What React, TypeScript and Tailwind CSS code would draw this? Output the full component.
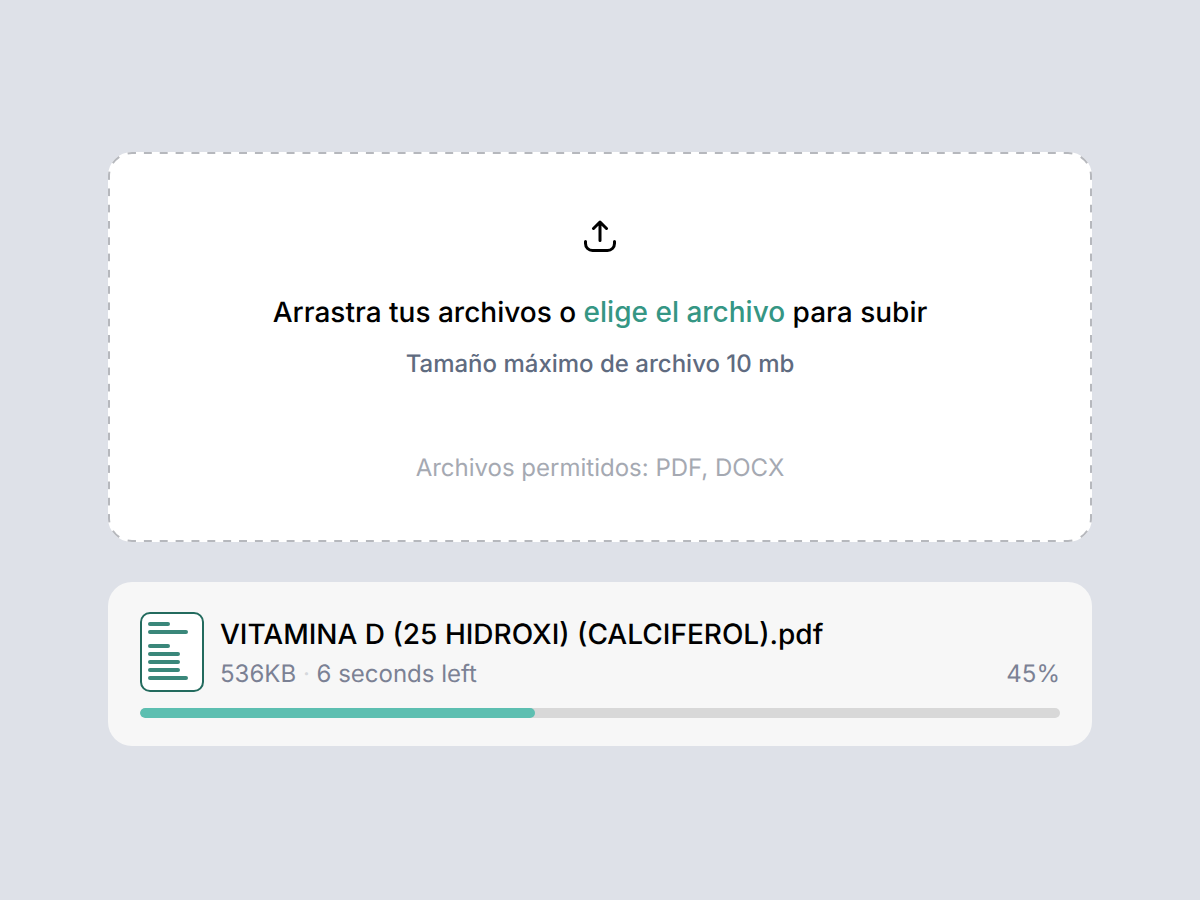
import { useState, useRef } from "react";

interface UploadItem {
  name: string;
  size: string;
  remaining: string;
  barWidth: number;
  percent: number;
}

const upload: UploadItem = {
  name: "VITAMINA D (25 HIDROXI) (CALCIFEROL).pdf",
  size: "536KB",
  remaining: "6 seconds left",
  barWidth: 42.9,
  percent: 45,
};

function UploadIcon() {
  return (
    <svg
      className="h-8 w-8"
      viewBox="0 0 32 32"
      fill="none"
      stroke="currentColor"
      strokeWidth="3"
      strokeLinecap="round"
      strokeLinejoin="round"
      aria-hidden="true"
    >
      <path d="M16 20.5V2M9.5 8.5 16 2l6.500 6.500" />
      <path d="M1.500 21.500v2a7 7 0 0 0 7 7h15a7 7 0 0 0 7-7v-2" />
    </svg>
  );
}

function FileIcon() {
  return (
    <svg className="h-20 w-16 shrink-0" viewBox="0 0 64 80" fill="none" aria-hidden="true">
      <rect x="1" y="1" width="62" height="78" rx="9" fill="white" stroke="#236b5e" strokeWidth="2" />
      <path
        d="M10 12h18M10 20h36M10 34h18M10 42h28M10 50h28M10 58h28M10 66h36"
        stroke="#3a877a"
        strokeWidth="4"
        strokeLinecap="round"
      />
    </svg>
  );
}

function Corner({ className }: { className: string }) {
  return (
    <svg className={className} viewBox="0 0 24 24" fill="none" aria-hidden="true">
      <path
        d="M1 24A23 23 0 0 1 24 1"
        pathLength="32"
        stroke="#b6b8bd"
        strokeWidth="2"
        strokeDasharray="8 8"
        strokeDashoffset="4"
      />
    </svg>
  );
}

/** Dashed outline with long dashes that stay even on every side */
function DashedOutline() {
  const horizontal =
    "absolute inset-x-6 h-0.5 bg-[linear-gradient(to_right,#b6b8bd_25%,transparent_25%_75%,#b6b8bd_75%)] bg-size-[16px_2px] bg-repeat-round";
  const vertical =
    "absolute inset-y-6 w-0.5 bg-[linear-gradient(to_bottom,#b6b8bd_25%,transparent_25%_75%,#b6b8bd_75%)] bg-size-[2px_16px] bg-repeat-round";

  return (
    <div className="pointer-events-none absolute inset-0">
      <div className={`${horizontal} top-0`} />
      <div className={`${horizontal} bottom-0`} />
      <div className={`${vertical} left-0`} />
      <div className={`${vertical} right-0`} />
      <Corner className="absolute left-0 top-0 h-6 w-6" />
      <Corner className="absolute right-0 top-0 h-6 w-6 rotate-90" />
      <Corner className="absolute bottom-0 right-0 h-6 w-6 rotate-180" />
      <Corner className="absolute bottom-0 left-0 h-6 w-6 -rotate-90" />
    </div>
  );
}

export default function App() {
  const [dragActive, setDragActive] = useState(false);
  const fileInputRef = useRef<HTMLInputElement>(null);

  const handleDrag = (e: React.DragEvent) => {
    e.preventDefault();
    if (e.type === "dragover") setDragActive(true);
    else setDragActive(false);
  };

  return (
    <main className="flex min-h-screen flex-col justify-center gap-10 bg-[#dee1e8] px-[9%] pb-0.5 font-['Inter',sans-serif] [text-rendering:geometricPrecision]">
      {/* Drop zone */}
      <section
        className={`relative flex flex-col items-center rounded-3xl px-8 pb-[54px] pt-[68px] text-center ${
          dragActive ? "bg-teal-50" : "bg-white"
        }`}
        onDragOver={handleDrag}
        onDragLeave={handleDrag}
        onDrop={handleDrag}
      >
        <DashedOutline />
        <UploadIcon />
        <p className="mt-10 text-[28px] leading-10 font-medium text-black">
          Arrastra tus archivos o{" "}
          <button
            type="button"
            className="cursor-pointer text-[#359684]"
            onClick={() => fileInputRef.current?.click()}
          >
            elige el archivo
          </button>{" "}
          para subir
        </p>
        <p className="mt-3 text-2xl leading-10 font-medium text-[#5f6b80]">
          Tamaño máximo de archivo 10 mb
        </p>
        <p className="mt-16 text-2xl leading-10 text-[#a5a9b2]">
          Archivos permitidos: PDF, DOCX
        </p>
        <input
          ref={fileInputRef}
          type="file"
          accept=".pdf,.docx"
          aria-label="Elige el archivo"
          className="hidden"
        />
      </section>

      {/* Upload progress */}
      <section className="rounded-3xl bg-[#f7f7f7] px-8 pb-7 pt-[30px]">
        <div className="flex gap-4">
          <FileIcon />
          <div className="min-w-0 flex-1">
            <h2 className="text-[28px] leading-11 font-medium text-black">{upload.name}</h2>
            <div className="flex justify-between text-2xl leading-9 text-[#7b8194]">
              <p>
                {upload.size} <span className="text-[#d5d7dc]">·</span> {upload.remaining}
              </p>
              <p>{upload.percent}%</p>
            </div>
          </div>
        </div>
        <div
          role="progressbar"
          aria-label={upload.name}
          aria-valuenow={upload.percent}
          aria-valuemin={0}
          aria-valuemax={100}
          className="mt-4 h-2.5 overflow-hidden rounded-full bg-[#d8d8d8]"
        >
          <div
            className="h-full rounded-full bg-[#5dbfb1]"
            style={{ width: `${upload.barWidth}%` }}
          />
        </div>
      </section>
    </main>
  );
}
